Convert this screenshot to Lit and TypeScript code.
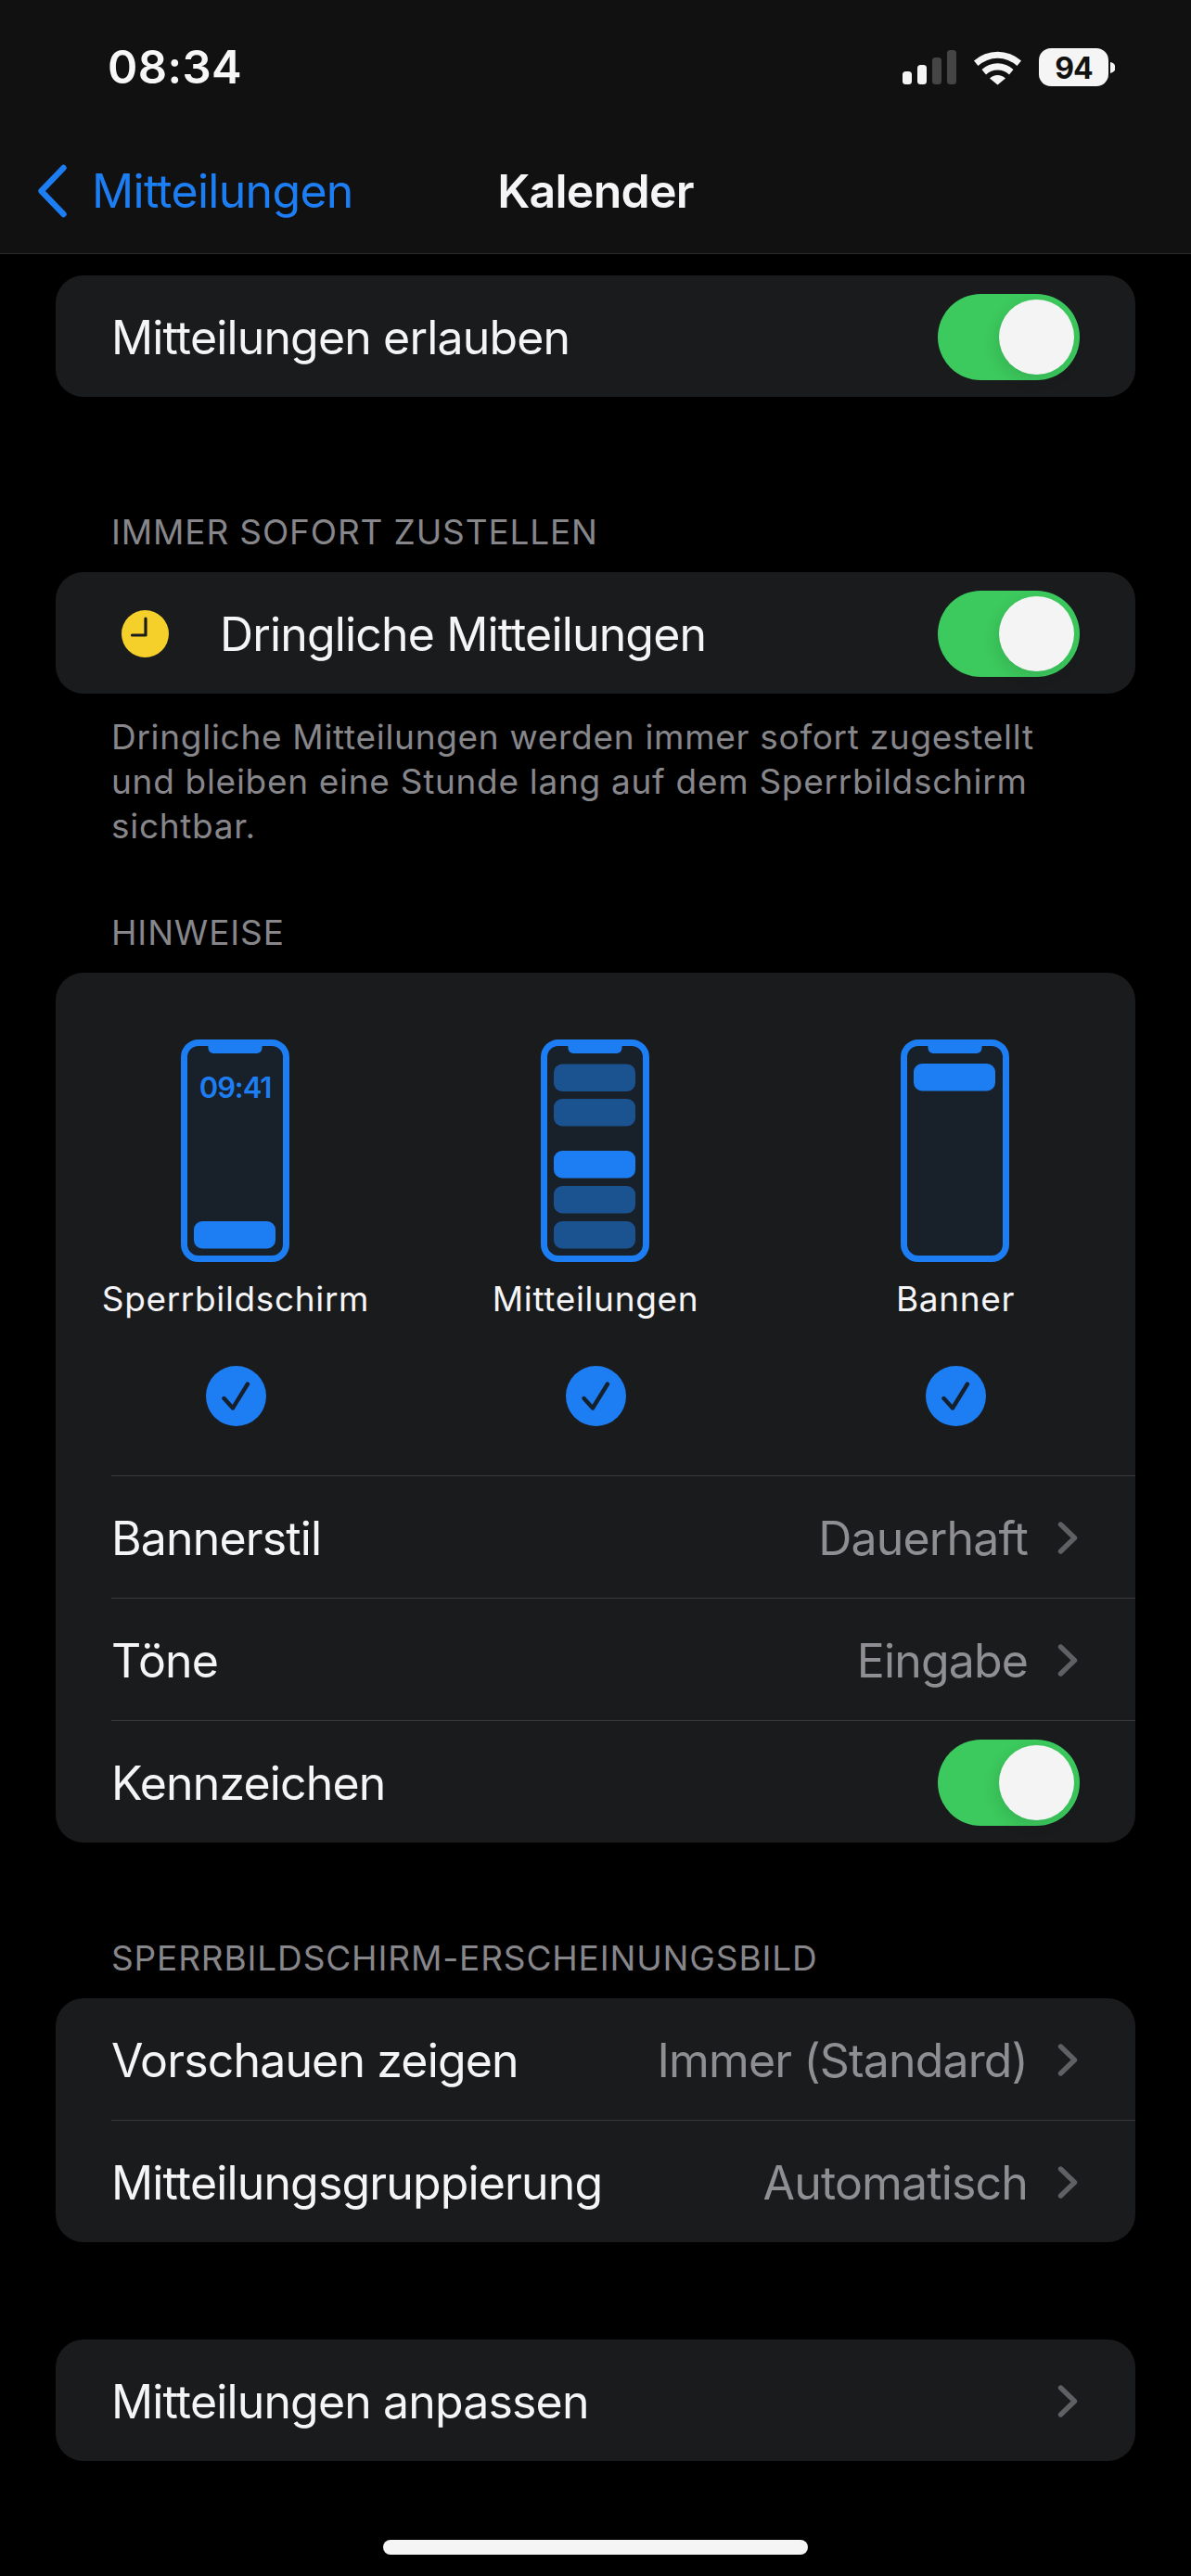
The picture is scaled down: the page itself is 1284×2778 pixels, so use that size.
import { LitElement, html, css, svg } from "lit";
import { customElement } from "lit/decorators.js";

const BLUE = "#1c7ef2";
const DIM = "#1b5290";

function phone(kind: string) {
  const bar = (y: number, fill: string) =>
    svg`<rect x="14" y=${y} width="88" height="29.5" rx="9" fill=${fill}></rect>`;
  let inner = svg``;
  if (kind === "lock") {
    inner = svg`<text x="58.5" y="63" text-anchor="middle" class="clock">09:41</text>${bar(196, BLUE)}`;
  } else if (kind === "list") {
    inner = svg`${bar(26.5, DIM)}${bar(64, DIM)}${bar(120, BLUE)}${bar(158, DIM)}${bar(196, DIM)}`;
  } else {
    inner = svg`${bar(26, BLUE)}`;
  }
  return html`<svg class="phone" width="117" height="240" viewBox="0 0 117 240">
    <path
      d="M19 3.5H98A15.5 15.5 0 0 1 113.5 19V221A15.5 15.5 0 0 1 98 236.5H19A15.5 15.5 0 0 1 3.5 221V19A15.5 15.5 0 0 1 19 3.5Z"
      fill="#18202a"
      stroke=${BLUE}
      stroke-width="7"
    ></path>
    <path d="M28 3H89V6C88 6 87.6 6.6 87.6 8C87.6 13 85 15 81 15H36C32 15 29.4 13 29.4 8C29.4 6.6 29 6 28 6Z" fill=${BLUE}></path>
    ${inner}
  </svg>`;
}

const chevron = html`<svg class="chev" width="22" height="35" viewBox="0 0 22 35">
  <path d="M3.5 3L18.5 17.5L3.5 32" fill="none" stroke="#5f5f64" stroke-width="5.4" stroke-linecap="round" stroke-linejoin="round"></path>
</svg>`;

const toggle = html`<div class="toggle"><div class="knob"></div></div>`;

const check = html`<svg class="check" width="65" height="65" viewBox="0 0 65 65">
  <circle cx="32.5" cy="32.5" r="32.5" fill=${BLUE}></circle>
  <path d="M19.5 35L29 45.5L45 19.5" fill="none" stroke="#16202c" stroke-width="4.4" stroke-linecap="round" stroke-linejoin="round"></path>
</svg>`;

@customElement("app-root")
export class AppRoot extends LitElement {
  static styles = css`
    :host {
      display: block;
      width: 1284px;
      height: 2778px;
      background: #000;
      overflow: hidden;
      font-family: Inter, "Liberation Sans", sans-serif;
      color: #f5f5f7;
      font-size: 50px;
      letter-spacing: -0.85px;
    }
    .top {
      height: 273px;
      background: #111112;
      border-bottom: 1px solid #2a2a2c;
      display: flex;
      flex-direction: column;
    }
    .status {
      height: 146px;
      position: relative;
      display: flex;
      align-items: flex-start;
      justify-content: space-between;
      padding: 0 82px 0 116px;
    }
    .time {
      font-size: 49px;
      font-weight: 600;
      line-height: 60px;
      margin-top: 43px;
      letter-spacing: 0.4px;
      color: #f7f7f7;
    }
    .sys {
      display: block;
      margin-top: 50px;
    }
    .batt {
      font: 700 32px Inter, "Liberation Sans", sans-serif;
      fill: #111;
    }
    .nav {
      flex: 1;
      display: grid;
      grid-template-columns: 1fr auto 1fr;
      align-items: center;
      padding-bottom: 8px;
    }
    .back {
      display: flex;
      align-items: center;
      gap: 26px;
      padding-left: 40px;
      color: #1c7ef2;
      letter-spacing: -0.7px;
    }
    .backicon {
      display: block;
    }
    .title {
      font-weight: 600;
      letter-spacing: -0.75px;
    }
    .card {
      margin: 0 60px;
      background: #1a1b1d;
      border-radius: 30px;
      overflow: hidden;
    }
    .first {
      margin-top: 23px;
    }
    .row {
      height: 131px;
      display: flex;
      align-items: center;
      padding: 2px 62px 0 60px;
      box-sizing: border-box;
    }
    .row > span {
      padding-top: 1px;
    }
    .line {
      height: 132px;
      padding-left: 0;
      margin-left: 60px;
      border-top: 1px solid #3a3a3c;
    }
    .grow {
      flex: 1;
    }
    .value {
      color: #8e8e93;
      margin-right: 32px;
    }
    .chev {
      display: block;
    }
    .toggle {
      width: 153px;
      height: 93px;
      margin-right: -2px;
      border-radius: 47px;
      background: #3cc95d;
      display: flex;
      align-items: center;
      justify-content: flex-end;
      padding-right: 6px;
      box-sizing: border-box;
    }
    .knob {
      width: 81px;
      height: 81px;
      border-radius: 50%;
      background: #f4f4f5;
      box-shadow: -3px 6px 16px rgba(0, 0, 0, 0.1);
    }
    .head {
      margin: 0 60px 20px;
      padding-left: 60px;
      font-size: 37px;
      line-height: 46px;
      letter-spacing: 0.85px;
      color: #86868b;
    }
    .m121 {
      margin-top: 123px;
    }
    .m66 {
      margin-top: 68px;
    }
    .m100 {
      margin-top: 102px;
    }
    .foot {
      margin: 23px 60px 0;
      padding: 0 60px;
      font-size: 37px;
      line-height: 48px;
      letter-spacing: 0.7px;
      color: #86868b;
    }
    .clockicon {
      display: block;
      margin: 0 55px 0 11px;
    }
    .modes {
      display: grid;
      grid-template-columns: repeat(3, 1fr);
      height: 542px;
      padding-top: 72px;
      box-sizing: border-box;
    }
    .mode {
      display: flex;
      flex-direction: column;
      align-items: center;
    }
    .phone {
      display: block;
      margin-right: 1px;
    }
    .clock {
      font: 600 31px Inter, "Liberation Sans", sans-serif;
      letter-spacing: -1.1px;
      fill: #1c7ef2;
    }
    .mode-label {
      font-size: 37px;
      line-height: 46px;
      margin-top: 17px;
      letter-spacing: 0.65px;
    }
    .check {
      display: block;
      margin-top: 49px;
    }
    .m105 {
      margin-top: 105px;
    }
    .homebar {
      width: 458px;
      height: 16px;
      border-radius: 8px;
      background: #f5f5f5;
      margin: 85px auto 0;
    }
  `;

  private valueRow(label: string, value: string, lined: boolean) {
    return html`<div class="row ${lined ? "line" : ""}">
      <span>${label}</span><span class="grow"></span><span class="value">${value}</span>${chevron}
    </div>`;
  }

  private mode(kind: string, label: string) {
    return html`<div class="mode">
      ${phone(kind)}<span class="mode-label">${label}</span>${check}
    </div>`;
  }

  render() {
    return html`
      <div class="top">
        <div class="status">
          <span class="time">08:34</span>
          <svg class="sys" width="232" height="46" viewBox="970 50 232 46">
            <rect x="973" y="77" width="10" height="14" rx="3.5" fill="#f5f5f5"></rect>
            <rect x="989" y="70" width="10" height="21" rx="3.5" fill="#f5f5f5"></rect>
            <rect x="1005" y="62" width="10" height="29" rx="3.5" fill="#454545"></rect>
            <rect x="1021" y="54" width="10" height="37" rx="3.5" fill="#454545"></rect>
            <path d="M1050 65.5A38 38 0 0 1 1101 65.5L1096.5 71A31 31 0 0 0 1054.5 71Z" fill="#f5f5f5"></path>
            <path d="M1058.5 75A25 25 0 0 1 1092.5 75L1088 80.5A18 18 0 0 0 1063 80.5Z" fill="#f5f5f5"></path>
            <path d="M1067 84.5A12 12 0 0 1 1084 84.5L1075.5 91.5Z" fill="#f5f5f5"></path>
            <rect x="1120" y="52" width="75" height="41" rx="13" fill="#f5f5f5"></rect>
            <path d="M1197 67C1201 68 1202.5 70 1202.5 73C1202.5 76 1201 78 1197 79Z" fill="#f5f5f5"></path>
            <text x="1157.5" y="84.5" text-anchor="middle" class="batt">94</text>
          </svg>
        </div>
        <div class="nav">
          <div class="back">
            <svg class="backicon" width="33" height="58" viewBox="0 0 33 58">
              <path d="M28.5 4L4.5 29L28.5 54" fill="none" stroke=${BLUE} stroke-width="6.4" stroke-linecap="round" stroke-linejoin="round"></path>
            </svg>
            <span>Mitteilungen</span>
          </div>
          <div class="title">Kalender</div>
          <div></div>
        </div>
      </div>

      <div class="card first">
        <div class="row"><span>Mitteilungen erlauben</span><span class="grow"></span>${toggle}</div>
      </div>

      <div class="head m121">IMMER SOFORT ZUSTELLEN</div>
      <div class="card">
        <div class="row">
          <svg class="clockicon" width="51" height="51" viewBox="0 0 51 51">
            <circle cx="25.5" cy="25.5" r="25.5" fill="#f5d02a"></circle>
            <path d="M26 9V27H11.5" fill="none" stroke="#1c1c1e" stroke-width="3.2" stroke-linecap="round" stroke-linejoin="round"></path>
          </svg>
          <span>Dringliche Mitteilungen</span><span class="grow"></span>${toggle}
        </div>
      </div>
      <div class="foot">
        Dringliche Mitteilungen werden immer sofort zugestellt<br />und bleiben eine Stunde
        lang auf dem Sperrbildschirm<br />sichtbar.
      </div>

      <div class="head m66">HINWEISE</div>
      <div class="card">
        <div class="modes">
          ${this.mode("lock", "Sperrbildschirm")}
          ${this.mode("list", "Mitteilungen")}
          ${this.mode("banner", "Banner")}
        </div>
        ${this.valueRow("Bannerstil", "Dauerhaft", true)}
        ${this.valueRow("Töne", "Eingabe", true)}
        <div class="row line"><span>Kennzeichen</span><span class="grow"></span>${toggle}</div>
      </div>

      <div class="head m100">SPERRBILDSCHIRM-ERSCHEINUNGSBILD</div>
      <div class="card">
        ${this.valueRow("Vorschauen zeigen", "Immer (Standard)", false)}
        ${this.valueRow("Mitteilungsgruppierung", "Automatisch", true)}
      </div>

      <div class="card m105">${this.valueRow("Mitteilungen anpassen", "", false)}</div>

      <div class="homebar"></div>
    `;
  }
}
